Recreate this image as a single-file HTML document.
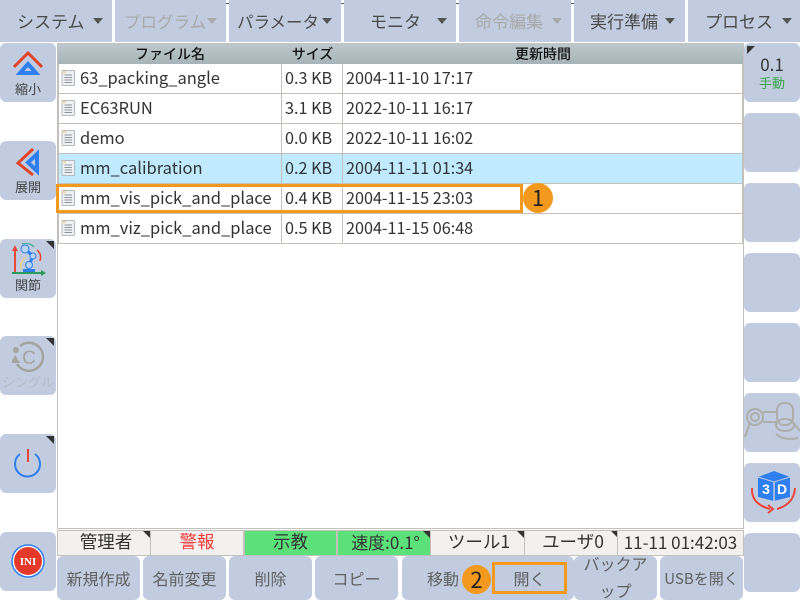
<!DOCTYPE html>
<html lang="ja"><head><meta charset="utf-8">
<style>
html,body{margin:0;padding:0;width:800px;height:600px;overflow:hidden;background:#fff}
body{font-family:"Noto Sans CJK JP","Liberation Sans",sans-serif;position:relative;color:#444}
.a{position:absolute;box-sizing:border-box}
.b{position:absolute;background:#c1cce0;display:flex;align-items:center;justify-content:center;text-align:center;white-space:nowrap}
.top{position:absolute;top:0;height:42px;background:#c1cce0;font-size:17px;line-height:42px;color:#4a4a4a;white-space:nowrap}
.top.d{color:#a9a9a9}
.top span{position:absolute;top:0}
.top i{position:absolute;top:18px;width:0;height:0;border-left:5px solid transparent;border-right:5px solid transparent;border-top:6px solid #555}
.top.d i{border-top-color:#a9a9a9}
.side{width:56px;height:59px;border-radius:6px}
.side span{position:absolute;left:-5px;right:-5px;top:37px;font-size:13px;line-height:18px;color:#444}
.tri{position:absolute;right:2px;top:2px;width:0;height:0;border-top:8px solid #333;border-left:8px solid transparent}
.trl{position:absolute;left:3px;top:3px;width:0;height:0;border-top:8px solid #333;border-right:8px solid transparent}
.st{position:absolute;top:530px;height:24px;background:#f2f1ef;border:1px solid #c4c1bc;font-size:17.5px;line-height:21px;text-align:center;color:#333;white-space:nowrap;overflow:hidden}
.st.g{background:#5ce07a}
.bt{top:556px;height:44px;width:83px;border-radius:6px;font-size:16px;color:#606060}
.hd{position:absolute;top:44px;height:20px;background:linear-gradient(#bcc8cc,#a6b3b8);font-size:14px;font-weight:500;line-height:20px;text-align:center;color:#111;border-right:1px solid #8f9ca1}
.r{position:absolute;left:58px;width:685px;height:30px;border-bottom:1px solid #c4c1bc;border-left:1px solid #c4c1bc;border-right:1px solid #c4c1bc;box-sizing:border-box;font-size:16.2px;color:#333;line-height:27px}
.r span{position:absolute;white-space:nowrap;top:0}
.r .n{left:21px;font-size:16.5px}.r .s{left:226px}.r .t{left:287px}
.r u{position:absolute;top:0;bottom:0;width:1px;background:#c4c1bc}
.r svg{position:absolute;left:0;top:5px}
.c{position:absolute;width:30px;height:30px;border-radius:50%;background:#f39a1e;color:#222;font-size:22px;line-height:29px;text-align:center}
.o{position:absolute;border:3px solid #f39a1e;box-sizing:border-box}
</style></head><body>

<div class="a" style="left:216px;top:-2px;width:367px;height:6px;background:#fff;border:1px solid #555"></div>
<div class="a" style="left:472px;top:0;width:1px;height:3px;background:#555"></div>

<div class="top" style="left:0;width:112px"><span style="left:17px">システム</span><i style="left:93px"></i></div>
<div class="top d" style="left:115px;width:111px"><span style="left:9px;font-size:16.5px">プログラム</span><i style="left:92px"></i></div>
<div class="top" style="left:229px;width:112px"><span style="left:8px;font-size:16.5px">パラメータ</span><i style="left:93px"></i></div>
<div class="top" style="left:344px;width:112px"><span style="left:26px">モニタ</span><i style="left:93px"></i></div>
<div class="top d" style="left:459px;width:112px"><span style="left:16px">命令編集</span><i style="left:93px"></i></div>
<div class="top" style="left:574px;width:111px"><span style="left:16px">実行準備</span><i style="left:91px"></i></div>
<div class="top" style="left:688px;width:112px"><span style="left:17px">プロセス</span><i style="left:94px"></i></div>

<div class="b side" style="left:0;top:43px"><svg class="a" style="left:13px;top:8px" width="30" height="26" viewBox="0 0 30 26"><path d="M1 16 L15 2 L29 16" fill="none" stroke="#e0452c" stroke-width="3"/><path d="M15 13 L23 22 L7 22 Z" fill="none" stroke="#2f7ff0" stroke-width="4"/></svg><span>縮小</span></div>
<div class="b side" style="left:0;top:141px"><svg class="a" style="left:16px;top:6px" width="26" height="30" viewBox="0 0 26 30"><path d="M17 2 L2 16 L17 28" fill="none" stroke="#e0452c" stroke-width="3"/><path d="M21 7 L21 24 L12 15.5 Z" fill="none" stroke="#2f7ff0" stroke-width="4"/></svg><span>展開</span></div>
<div class="b side" style="left:0;top:239px"><i class="tri"></i><svg class="a" style="left:11px;top:4px" width="36" height="34" viewBox="0 0 36 34"><path d="M4 30 V5" stroke="#e8473a" stroke-width="2"/><path d="M1 8 L4 2 L7 8 Z" fill="#e8473a"/><path d="M1 30 H31" stroke="#2f9a5e" stroke-width="2"/><path d="M30 27 L35 30 L30 33 Z" fill="#2f9a5e"/><path d="M14 6 L22 13 L18 22" fill="none" stroke="#2f7ff0" stroke-width="3"/><circle cx="14" cy="6" r="4" fill="#b9d4f0" stroke="#2f7ff0"/><circle cx="22" cy="13" r="3" fill="#b9d4f0" stroke="#2f7ff0"/><circle cx="18" cy="22" r="3.500" fill="#b9d4f0" stroke="#2f7ff0"/><path d="M12 29 H24 V26 H12 Z" fill="#2f7ff0"/><path d="M26 7 Q31 11 29 18" stroke="#e8473a" fill="none" stroke-width="1.500"/><path d="M14 15 Q9 18 10 26" stroke="#e8d48a" fill="none" stroke-width="1.500"/><path d="M11 1 Q18 -1 23 4" stroke="#4fb09a" fill="none" stroke-width="1.500"/></svg><span>関節</span></div>
<div class="b side" style="left:0;top:336px"><i class="tri"></i><svg class="a" style="left:12px;top:5px" width="34" height="32" viewBox="0 0 34 32"><path d="M5 23 A14 14 0 1 0 8 5" fill="none" stroke="#a5a39d" stroke-width="2.500"/><path d="M-1 22 L8 22 L3 14 Z" fill="#a5a39d"/><circle cx="4" cy="9" r="3" fill="#a5a39d"/><text x="17" y="23" font-size="19" fill="#a5a39d" text-anchor="middle" font-family="Liberation Sans,sans-serif">C</text></svg><span style="color:#b5bcc9">シングル</span></div>
<div class="b side" style="left:0;top:434px"><i class="tri"></i><svg class="a" style="left:13px;top:14px" width="30" height="30" viewBox="0 0 30 30"><path d="M7 6 A12.500 12.500 0 1 0 22 6" fill="none" stroke="#2f7ff0" stroke-width="2"/><path d="M15 1 V14" stroke="#e8473a" stroke-width="2"/></svg></div>
<div class="b side" style="left:0;top:532px"><svg class="a" style="left:11px;top:12px" width="34" height="34" viewBox="0 0 34 34"><circle cx="17" cy="17" r="16" fill="#fff" stroke="#2f7ff0" stroke-width="1.500"/><circle cx="17" cy="17" r="14" fill="#e5392a"/><text x="17" y="21" font-size="11" font-weight="bold" fill="#fff" text-anchor="middle" font-family="Liberation Serif,serif">INI</text></svg></div>

<div class="a" style="left:57px;top:43px;width:687px;height:486px;border:1px solid #c4c1bc;background:#fff"></div>
<div class="hd" style="left:58px;width:224px">ファイル名</div>
<div class="hd" style="left:282px;width:61px">サイズ</div>
<div class="hd" style="left:343px;width:400px;border-right:0">更新時間</div>

<div class="r" style="top:64px"><u style="left:222px"></u><u style="left:283px"></u><svg width="18" height="18" viewBox="0 0 18 18"><path d="M4 1.500H14.500Q15.500 1.500 15.500 2.500V15.500Q15.500 16.500 14.500 16.500H4Q3 16.500 3 15.500V2.500Q3 1.500 4 1.500Z" fill="#eef1f3" stroke="#b4babe"/><path d="M5.500 6H13M5.500 8.500H13M5.500 11H13M5.500 13.500H13" stroke="#8d969c"/><path d="M3 2H7V4H3Z" fill="#f0d9a8"/></svg><span class="n">63_packing_angle</span><span class="s">0.3 KB</span><span class="t">2004-11-10 17:17</span></div>
<div class="r" style="top:94px"><u style="left:222px"></u><u style="left:283px"></u><svg width="18" height="18" viewBox="0 0 18 18"><path d="M4 1.500H14.500Q15.500 1.500 15.500 2.500V15.500Q15.500 16.500 14.500 16.500H4Q3 16.500 3 15.500V2.500Q3 1.500 4 1.500Z" fill="#eef1f3" stroke="#b4babe"/><path d="M5.500 6H13M5.500 8.500H13M5.500 11H13M5.500 13.500H13" stroke="#8d969c"/><path d="M3 2H7V4H3Z" fill="#f0d9a8"/></svg><span class="n">EC63RUN</span><span class="s">3.1 KB</span><span class="t">2022-10-11 16:17</span></div>
<div class="r" style="top:124px"><u style="left:222px"></u><u style="left:283px"></u><svg width="18" height="18" viewBox="0 0 18 18"><path d="M4 1.500H14.500Q15.500 1.500 15.500 2.500V15.500Q15.500 16.500 14.500 16.500H4Q3 16.500 3 15.500V2.500Q3 1.500 4 1.500Z" fill="#eef1f3" stroke="#b4babe"/><path d="M5.500 6H13M5.500 8.500H13M5.500 11H13M5.500 13.500H13" stroke="#8d969c"/><path d="M3 2H7V4H3Z" fill="#f0d9a8"/></svg><span class="n">demo</span><span class="s">0.0 KB</span><span class="t">2022-10-11 16:02</span></div>
<div class="r" style="top:154px;background:#bfeaff"><u style="left:222px"></u><u style="left:283px"></u><svg width="18" height="18" viewBox="0 0 18 18"><path d="M4 1.500H14.500Q15.500 1.500 15.500 2.500V15.500Q15.500 16.500 14.500 16.500H4Q3 16.500 3 15.500V2.500Q3 1.500 4 1.500Z" fill="#eef1f3" stroke="#b4babe"/><path d="M5.500 6H13M5.500 8.500H13M5.500 11H13M5.500 13.500H13" stroke="#8d969c"/><path d="M3 2H7V4H3Z" fill="#f0d9a8"/></svg><span class="n">mm_calibration</span><span class="s">0.2 KB</span><span class="t">2004-11-11 01:34</span></div>
<div class="r" style="top:184px"><u style="left:222px"></u><u style="left:283px"></u><svg width="18" height="18" viewBox="0 0 18 18"><path d="M4 1.500H14.500Q15.500 1.500 15.500 2.500V15.500Q15.500 16.500 14.500 16.500H4Q3 16.500 3 15.500V2.500Q3 1.500 4 1.500Z" fill="#eef1f3" stroke="#b4babe"/><path d="M5.500 6H13M5.500 8.500H13M5.500 11H13M5.500 13.500H13" stroke="#8d969c"/><path d="M3 2H7V4H3Z" fill="#f0d9a8"/></svg><span class="n">mm_vis_pick_and_place</span><span class="s">0.4 KB</span><span class="t">2004-11-15 23:03</span></div>
<div class="r" style="top:214px"><u style="left:222px"></u><u style="left:283px"></u><svg width="18" height="18" viewBox="0 0 18 18"><path d="M4 1.500H14.500Q15.500 1.500 15.500 2.500V15.500Q15.500 16.500 14.500 16.500H4Q3 16.500 3 15.500V2.500Q3 1.500 4 1.500Z" fill="#eef1f3" stroke="#b4babe"/><path d="M5.500 6H13M5.500 8.500H13M5.500 11H13M5.500 13.500H13" stroke="#8d969c"/><path d="M3 2H7V4H3Z" fill="#f0d9a8"/></svg><span class="n">mm_viz_pick_and_place</span><span class="s">0.5 KB</span><span class="t">2004-11-15 06:48</span></div>

<div class="o" style="left:56px;top:184px;width:467px;height:29px"></div>
<div class="c" style="left:523px;top:183px">1</div>

<div class="b side" style="left:744px;top:43px"><i class="trl"></i><div class="a" style="left:0;right:0;top:9px;font-size:17px;line-height:24px;color:#333">0.1</div><div class="a" style="left:0;right:0;top:32px;font-size:13px;line-height:16px;color:#3aa64a">手動</div></div>
<div class="b side" style="left:744px;top:113px"></div>
<div class="b side" style="left:744px;top:183px"></div>
<div class="b side" style="left:744px;top:253px"></div>
<div class="b side" style="left:744px;top:323px"></div>
<div class="b side" style="left:744px;top:393px"><svg class="a" style="left:0;top:8px" width="56" height="46" viewBox="0 0 56 46" fill="none" stroke="#adadaa" stroke-width="2"><circle cx="11" cy="16" r="8"/><circle cx="11" cy="16" r="4"/><path d="M1 36 L6 22 M19 11 H34 M19 21 H33"/><rect x="33" y="2" width="16" height="22" rx="7"/><ellipse cx="41" cy="24" rx="9" ry="6"/><path d="M32 33 Q40 40 54 37 M46 18 L56 30"/></svg></div>
<div class="b side" style="left:744px;top:463px"><svg class="a" style="left:6px;top:8px" width="46" height="46" viewBox="0 0 46 46"><path d="M24 0 L40 6 V26 L24 30 L8 26 V6 Z" fill="#2f7ff0"/><path d="M8 6 L24 11 L40 6" fill="none" stroke="#c1cce0" stroke-width="1"/><path d="M24 11 V30" stroke="#c1cce0" stroke-width="1.500"/><text x="16" y="23" font-size="14" font-weight="bold" fill="#fff" text-anchor="middle" font-family="Liberation Sans,sans-serif">3</text><text x="32" y="23" font-size="14" font-weight="bold" fill="#fff" text-anchor="middle" font-family="Liberation Sans,sans-serif">D</text><path d="M2 17 Q1 33 20 38 M27 38 Q44 33 45 17" fill="none" stroke="#f0453a" stroke-width="2"/><path d="M18 34 L23 38 L18 42" fill="none" stroke="#f0453a" stroke-width="2"/></svg></div>
<div class="b side" style="left:744px;top:533px"></div>

<div class="st" style="left:57px;width:90px;padding-left:3px">管理者<i class="tri" style="right:0;top:0"></i></div>
<div class="st" style="left:150px;width:92px;color:#f03a3a">警報</div>
<div class="st g" style="left:244px;width:91px">示教</div>
<div class="st g" style="left:337px;width:91px;padding-left:2px;font-size:17px">速度:0.1°<i class="tri" style="right:0;top:0"></i></div>
<div class="st" style="left:430px;width:92px;padding-left:2px">ツール1<i class="tri" style="right:0;top:0"></i></div>
<div class="st" style="left:524px;width:92px;padding-left:2px">ユーザ0<i class="tri" style="right:0;top:0"></i></div>
<div class="st" style="left:617px;width:125px;font-size:17px">11-11 01:42:03</div>

<div class="b bt" style="left:57px">新規作成</div>
<div class="b bt" style="left:143px">名前変更</div>
<div class="b bt" style="left:229px">削除</div>
<div class="b bt" style="left:315px">コピー</div>
<div class="b bt" style="left:402px;justify-content:flex-start;padding-left:25px">移動</div>
<div class="b bt" style="left:488px;padding-right:3px">開く</div>
<div class="b bt" style="left:574px;white-space:normal;line-height:27px;overflow:hidden"><div style="margin-top:-2px">バックア<br>ップ</div></div>
<div class="b bt" style="left:660px;font-size:15px">USBを開く</div>
<div class="o" style="left:492px;top:562px;width:75px;height:32px"></div>
<div class="c" style="left:462px;top:565px;width:29px;height:29px;line-height:28px">2</div>

</body></html>
